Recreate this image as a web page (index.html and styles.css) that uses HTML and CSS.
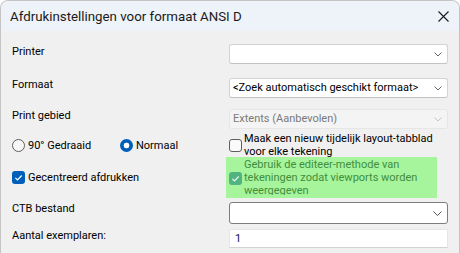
FILE: index.html
```html
<!DOCTYPE html>
<html>
<head>
<meta charset="utf-8" />
<title>Afdrukinstellingen</title>
<link rel="stylesheet" href="styles.css">
</head>
<body>
<div class="dialog">
	<div class="titlebar">
		<span class="title">Afdrukinstellingen voor formaat ANSI D</span>
		<svg class="close" width="11" height="11" viewBox="0 0 11 11"><path d="M0.5 0.5L10.5 10.5M10.5 0.5L0.5 10.5" stroke="#1a1a1a" stroke-width="1.1" fill="none"/></svg>
	</div>
	<div class="content">
		<div class="row r-printer">
			<span class="lbl">Printer</span>
			<div class="combo"><span class="val"></span><svg class="chev" width="8" height="5" viewBox="0 0 8 5"><path d="M0.5 0.5L4 4L7.5 0.5" stroke="#666" fill="none"/></svg></div>
		</div>
		<div class="row r-formaat">
			<span class="lbl">Formaat</span>
			<div class="combo"><span class="val">&lt;Zoek automatisch geschikt formaat&gt;</span><svg class="chev" width="8" height="5" viewBox="0 0 8 5"><path d="M0.5 0.5L4 4L7.5 0.5" stroke="#666" fill="none"/></svg></div>
		</div>
		<div class="row r-gebied">
			<span class="lbl">Print gebied</span>
			<div class="combo disabled"><span class="val">Extents (Aanbevolen)</span><svg class="chev" width="8" height="5" viewBox="0 0 8 5"><path d="M0.5 0.5L4 4L7.5 0.5" stroke="#c4c4c4" fill="none"/></svg></div>
		</div>
		<div class="row r-opts">
			<div class="radios">
				<span class="radio"><span class="dot"></span>90° Gedraaid</span>
				<span class="radio"><span class="dot on"></span>Normaal</span>
			</div>
			<div class="check">
				<span class="box"></span>
				<span class="txt">Maak een nieuw tijdelijk layout-tabblad voor elke tekening</span>
			</div>
		</div>
		<div class="row r-center">
			<div class="check left">
				<span class="box on"><svg width="13" height="13" viewBox="0 0 13 13"><path d="M3.4 6.9L5.5 9L9.7 4.5" stroke="#fff" stroke-width="1.2" fill="none"/></svg></span>
				<span class="txt">Gecentreerd afdrukken</span>
			</div>
			<div class="check hl">
				<span class="box green"><svg width="13" height="13" viewBox="0 0 13 13"><path d="M3.4 6.9L5.5 9L9.7 4.5" stroke="#e8f8ec" stroke-width="1.2" fill="none"/></svg></span>
				<span class="txt">Gebruik de editeer-methode van tekeningen zodat viewports worden weergegeven</span>
			</div>
		</div>
		<div class="row r-ctb">
			<span class="lbl">CTB bestand</span>
			<div class="combo focus"><span class="val"></span><svg class="chev" width="9" height="5" viewBox="0 0 9 5"><path d="M0.5 0.5L4.5 4.5L8.5 0.5" stroke="#555" fill="none"/></svg></div>
		</div>
		<div class="row r-aantal">
			<span class="lbl">Aantal exemplaren:</span>
			<div class="input">1</div>
		</div>
	</div>
</div>
</body>
</html>
```

FILE: styles.css
```css
body{margin:0;background:#fff;}
.dialog{width:458px;height:252px;border:1px solid #c4c4c4;border-bottom:0;border-radius:8px 8px 0 0;background:#f0f0f0;overflow:hidden;font-family:Roboto,"Noto Sans",sans-serif;font-size:11px;color:#000;}
.titlebar{height:30px;background:#eef2f9;display:flex;align-items:center;justify-content:space-between;padding:0 10px 0 9px;}
.titlebar .title{font-size:13.3px;color:#1a1a1a;}
.row{display:grid;grid-template-columns:228px 219px;align-items:start;}
.lbl{padding-left:11px;line-height:14px;}
.r-printer .lbl{margin-top:1px;}
.combo{box-sizing:border-box;height:20px;background:#fff;border:1px solid #d3d3d3;border-bottom-color:#c2c2c2;border-radius:3px;display:flex;align-items:center;justify-content:space-between;padding:0 5px 0 3px;line-height:14px;white-space:nowrap;}
.combo.disabled{background:#f4f4f4;border-color:#e6e6e6;color:#7a7a7a;}
.combo.focus{height:22px;border-color:#7d7d7d;}
.input{box-sizing:border-box;height:19px;background:#fff;border:1px solid #e6e6e6;border-bottom-color:#d2d2d2;padding-left:5px;line-height:17px;color:#141450;}
.r-printer{margin-top:13px;}
.r-formaat{margin-top:14px;}
.r-gebied{margin-top:11px;}
.r-opts{margin-top:3px;height:25px;align-items:center;}
.r-center{height:41px;align-items:center;}
.r-ctb{margin-top:4px;}
.r-aantal{margin-top:5px;}
.radios{display:grid;grid-template-columns:108px auto;padding-left:11px;}
.radio{display:flex;align-items:center;gap:3px;}
.dot{box-sizing:border-box;width:13px;height:13px;border-radius:50%;border:1px solid #5e5e5e;background:#f7f7f7;}
.dot.on{border:0;background:radial-gradient(circle,#fff 0 2.6px,#005fb8 3.2px);}
.check{display:flex;align-items:center;gap:2px;}
.check.left{padding-left:11px;gap:3px;}
.check .txt{line-height:13px;}
.box{box-sizing:border-box;width:13px;height:13px;flex:none;border-radius:3px;border:1px solid #5e5e5e;background:#fafafa;}
.box svg{display:block;}
.box.on{border:0;background:#005fb8;}
.box.green{border:0;background:#52b382;align-self:center;}
.hl{box-sizing:border-box;height:41px;width:211px;margin-left:-3px;padding:1px 0 0 3px;background:#a6f49c;align-items:flex-start;}
.hl .txt{height:37px;overflow:hidden;color:#418e3c;}
```
